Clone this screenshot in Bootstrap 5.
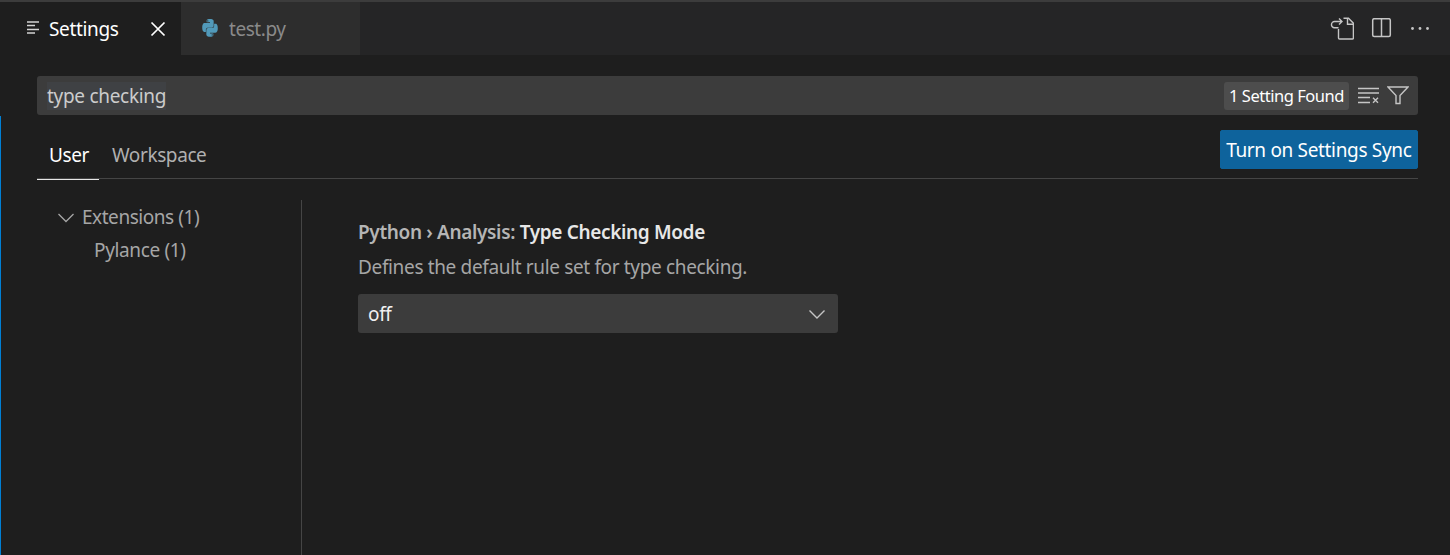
<!doctype html>
<html lang="en"><head><meta charset="utf-8"><title>Settings</title>
<link href="https://cdn.jsdelivr.net/npm/bootstrap@5.3.0/dist/css/bootstrap.min.css" rel="stylesheet">
<style>
html,body{height:555px;overflow:hidden}
body{background:#1e1e1e;font-family:"Noto Sans","Open Sans",sans-serif;font-size:19px;color:#ccc;letter-spacing:-.35px}
.topstrip{height:2px;background:#3c3c3c}
.tabbar{height:53px;background:#252526}
.tabitem{height:53px;font-size:19px}
.tab-on{width:181px;background:#1e1e1e;color:#fff;padding-left:26px}
.tab-off{width:179px;background:#2d2d2d;color:#8a8a8a;padding-left:19px}
.tabname{padding-top:2px}
.tab-on .tabname{margin-left:9px;width:101px}
.tab-off .tabname{margin-left:9px;letter-spacing:-.45px}
.acts{gap:18px;padding-right:20px}
.copyico{margin-right:-2px}
.searchrow{padding:21px 32px 0 37px}
.searchbox{height:39px;background:#3c3c3c;border-radius:3px;padding:0 9px 0 10px}
.qry{color:#ccc;background:#3f4144;height:28px;line-height:28px;letter-spacing:-.3px}
.foundbadge{background:#4d4d4d;color:#fff;font-size:16.5px;border-radius:3px;height:28px;padding:1px 5px 0;margin-right:9px;letter-spacing:-.47px}
.clearico{margin-right:7px}
.lowpart{height:439px;margin-top:1px;border-left:1px solid #007fd4;padding:0 32px 0 36px}
.tabsline{height:63px;border-bottom:1px solid #454545}
.scope{height:63px;padding:16px 12px 0 13px;color:#b0b0b0;letter-spacing:-.4px}
.scope-on{color:#fff;border-bottom:1px solid #e7e7e7;height:64px;padding-left:12px;padding-right:10px}
.syncbtn{--bs-btn-bg:#0e639c;--bs-btn-color:#fff;--bs-btn-border-color:#0e639c;--bs-btn-hover-bg:#0e639c;--bs-btn-hover-color:#fff;--bs-btn-padding-x:5.5px;--bs-btn-padding-y:0;--bs-btn-font-size:19px;--bs-btn-border-radius:2px;height:39px;margin-top:14px;padding-top:2px;letter-spacing:-.33px;white-space:nowrap}
.mainrow{height:376px;padding-top:21px}
.treecol{width:265px;height:355px;padding-top:1px;border-right:1px solid #454545;color:#a6a6a6;letter-spacing:-.45px}
.treeitem{height:33px}
.tree-top{padding-left:20px}
.tree-sub{padding-left:57px;letter-spacing:-.35px}
.treeico{margin-right:7px}
.detail{padding:18px 0 0 56px}
.settitle{height:32px;font-weight:600;color:#b5b5b5}
.settitle b{color:#e7e7e7;font-weight:600}
.setdesc{height:44px;color:#a6a6a6;padding-top:3px}
.selbox{width:480px;height:39px;background:#3c3c3c;border-radius:3px;padding:0 12px 0 10px;color:#f0f0f0}
.seltext{padding-top:2px}
svg{display:block;flex:none}
</style></head><body>
<div class="topstrip"></div>
<div class="tabbar d-flex align-items-center">
  <div class="tabitem tab-on d-flex align-items-center">
    <svg width="14" height="16" viewBox="0 0 14 16" fill="none" stroke="#d4d4d4" stroke-width="1.5"><path d="M1 .9h12M1 4.600h8M1 8.400h12M1 12.100h8"/></svg>
    <span class="tabname">Settings</span>
    <svg width="16" height="16" viewBox="0 0 16 16" fill="none" stroke="#fff" stroke-width="1.7"><path d="M1.500 1.500l13 13M14.500 1.500l-13 13"/></svg>
  </div>
  <div class="tabitem tab-off d-flex align-items-center">
    <svg width="20" height="20" viewBox="0 1 18 18"><path fill="#519aba" d="M8.800 1C5.900 1 6 2.300 6 2.300V4h3v.7H4.200S2 4.500 2 8.700s1.900 4 1.900 4H5.300v-2s-.1-1.900 1.900-1.900h3.300s1.800 0 1.800-1.800V3s.3-2-3.500-2zM7 2.100a.6.6 0 1 1 0 1.200.6.6 0 0 1 0-1.200z"/><path fill="#519aba" d="M9.200 17c2.900 0 2.800-1.300 2.800-1.300V14H9v-.7h4.800s2.200.2 2.200-4-1.900-4-1.900-4h-1.400v2s.1 1.900-1.900 1.900H7.500s-1.800 0-1.800 1.800V15s-.3 2 3.500 2zM11 15.900a.6.6 0 1 1 0-1.200.6.6 0 0 1 0 1.200z"/></svg>
    <span class="tabname">test.py</span>
  </div>
  <div class="acts d-flex align-items-center ms-auto">
    <svg class="copyico" width="24" height="24" viewBox="0 0 24 24" fill="none" stroke="#c5c5c5" stroke-width="1.400"><path d="M13.500 1.200H18.500L23.400 6.200V21a1 1 0 0 1-1 1H9.500a1 1 0 0 1-1-1V12"/><path d="M17.500 1.200V7.200H23.400"/><path d="M8.500 10.800H4.500A3 3 0 0 1 1.500 7.500A3 3 0 0 1 4.500 4.500H12M9 1.500L12 4.500L9 7.500"/></svg>
    <svg width="22" height="22" viewBox="0 0 22 22" fill="none" stroke="#c5c5c5" stroke-width="1.500"><rect x="2.700" y=".7" width="17.600" height="17.800" rx="1.500"/><path d="M11.500 .7v17.800"/></svg>
    <svg width="20" height="20" viewBox="0 0 20 20" fill="#c5c5c5"><circle cx="2.500" cy="9.500" r="1.400"/><circle cx="10" cy="9.500" r="1.400"/><circle cx="17.500" cy="9.500" r="1.400"/></svg>
  </div>
</div>
<div class="searchrow">
  <div class="searchbox d-flex align-items-center">
    <span class="qry me-auto">type checking</span>
    <span class="foundbadge d-flex align-items-center">1 Setting Found</span>
    <svg class="clearico" width="22" height="18" viewBox="0 0 22 18" fill="none" stroke="#c5c5c5" stroke-width="1.400"><path d="M0 1.500h21M0 6h21M0 10.500h12M0 15.500h12M15 10.800l5 5M20 10.800l-5 5"/></svg>
    <svg width="22" height="20" viewBox="0 0 22 20" fill="none" stroke="#c5c5c5" stroke-width="1.400"><path d="M1 1h20l-8 8.500v8H9v-8z"/></svg>
  </div>
</div>
<div class="lowpart">
  <div class="tabsline d-flex justify-content-between">
    <div class="d-flex">
      <div class="scope scope-on d-flex align-items-center">User</div>
      <div class="scope d-flex align-items-center">Workspace</div>
    </div>
    <button class="btn syncbtn" type="button">Turn on Settings Sync</button>
  </div>
  <div class="mainrow d-flex">
    <div class="treecol">
      <div class="treeitem tree-top d-flex align-items-center"><svg class="treeico" width="18" height="18" viewBox="0 0 18 18" fill="none" stroke="#a6a6a6" stroke-width="1.300"><path d="M1.500 5l7.500 7.500 7.500-7.500"/></svg>Extensions (1)</div>
      <div class="treeitem tree-sub d-flex align-items-center">Pylance (1)</div>
    </div>
    <div class="detail">
      <div class="settitle">Python › Analysis: <b>Type Checking Mode</b></div>
      <div class="setdesc">Defines the default rule set for type checking.</div>
      <div class="selbox d-flex align-items-center justify-content-between"><span class="seltext">off</span>
        <svg width="18" height="18" viewBox="0 0 18 18" fill="none" stroke="#c5c5c5" stroke-width="1.400"><path d="M1.500 5.500l7.500 7.500 7.500-7.500"/></svg>
      </div>
    </div>
  </div>
</div>
</body></html>
